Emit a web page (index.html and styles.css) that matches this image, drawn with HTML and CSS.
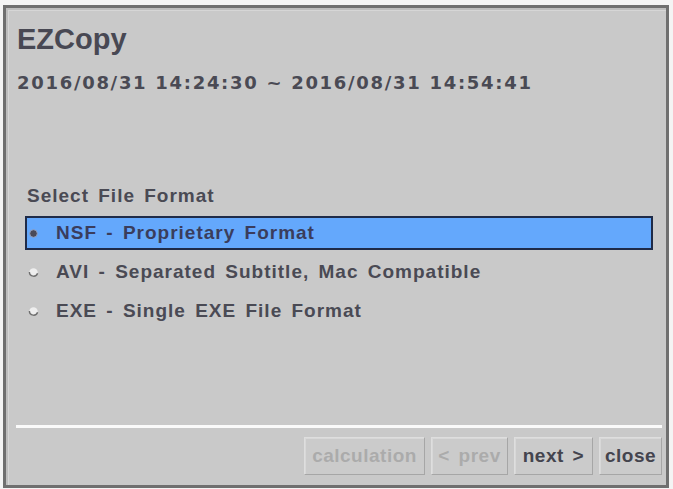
FILE: index.html
```html
<!DOCTYPE html>
<html>
<head>
<meta charset="utf-8">
<link rel="stylesheet" href="styles.css">
</head>
<body>
<div class="frame">
  <div class="title">EZCopy</div>
  <div class="range">2016/08/31 14:24:30 ~ 2016/08/31 14:54:41</div>
  <div class="label">Select File Format</div>
  <div class="options">
    <div class="opt selected">
      <svg class="radio" width="11" height="11" viewBox="0 0 11 11"><circle cx="5.5" cy="5.5" r="3.8" fill="#4a4a58" stroke="#9aa4c0" stroke-width="0.9"/></svg>
      <span>NSF - Proprietary Format</span>
    </div>
    <div class="opt">
      <svg class="radio" width="11" height="11" viewBox="0 0 11 11"><circle cx="5.5" cy="5.5" r="4.2" fill="#eeeeee"/><path d="M1.4 5 A4.2 4.2 0 0 0 9.6 6.3" fill="none" stroke="#6e6e6e" stroke-width="1.4"/></svg>
      <span>AVI - Separated Subtitle, Mac Compatible</span>
    </div>
    <div class="opt">
      <svg class="radio" width="11" height="11" viewBox="0 0 11 11"><circle cx="5.5" cy="5.5" r="4.2" fill="#eeeeee"/><path d="M1.4 5 A4.2 4.2 0 0 0 9.6 6.3" fill="none" stroke="#6e6e6e" stroke-width="1.4"/></svg>
      <span>EXE - Single EXE File Format</span>
    </div>
  </div>
  <div class="spacer"></div>
  <div class="sep"></div>
  <div class="buttons">
    <div class="btn disabled calc">calculation</div>
    <div class="btn disabled prev">&lt; prev</div>
    <div class="btn next">next &gt;</div>
    <div class="btn close">close</div>
  </div>
</div>
</body>
</html>
```
FILE: styles.css
```css
html, body {
  margin: 0;
  padding: 0;
  background: #f4f4f4;
}
body {
  width: 673px;
  height: 489px;
  overflow: hidden;
  font-family: "Liberation Sans", Arial, sans-serif;
  font-weight: bold;
  color: #4a4a54;
}
.frame {
  box-sizing: border-box;
  margin: 5px 4px 0 3px;
  height: 483px;
  background: #c9c9c9;
  border: 3px solid #6f6f6f;
  box-shadow: inset 2px 2px 0 #bdbdbd, inset 3px 3px 0 #d6d6d6;
  padding: 14px 4px 10px 10px;
  display: flex;
  flex-direction: column;
}
.title {
  font-size: 29px;
  line-height: 34px;
  height: 34px;
  margin-left: 1px;
  color: #484853;
}
.range {
  font-family: "DejaVu Sans", "Liberation Sans", sans-serif;
  font-size: 18px;
  line-height: 22px;
  height: 22px;
  margin-top: 16px;
  margin-left: 1px;
  letter-spacing: 1.7px;
  white-space: nowrap;
}
.label {
  font-size: 19px;
  line-height: 24px;
  height: 24px;
  margin-top: 90px;
  margin-left: 11px;
  letter-spacing: 1px;
  word-spacing: 3px;
}
.options {
  margin: 8px 9px 0 9px;
  display: flex;
  flex-direction: column;
  gap: 5px;
}
.opt {
  box-sizing: border-box;
  height: 34px;
  border: 1px solid transparent;
  display: flex;
  align-items: center;
  padding-left: 2px;
  font-size: 19px;
  line-height: 32px;
  letter-spacing: 1px;
  word-spacing: 3px;
  white-space: nowrap;
}
.opt .radio {
  flex: none;
  margin-right: 17px;
}
.opt.selected {
  background: #64a8fc;
  border: 2px solid #1f2b48;
  padding-left: 1px;
  color: #3a3d5c;
}
.spacer {
  flex: 1;
}
.sep {
  height: 3px;
  background: #fafafa;
  margin-bottom: 9px;
}
.buttons {
  display: flex;
  justify-content: flex-end;
  gap: 6px;
  height: 38px;
}
.btn {
  box-sizing: border-box;
  height: 38px;
  display: flex;
  align-items: center;
  justify-content: center;
  font-size: 19px;
  letter-spacing: 0.5px;
  word-spacing: 3px;
  background: #cbcbcb;
  border: 1px solid #dedede;
  border-right-color: #a6a6a6;
  border-bottom-color: #a6a6a6;
  box-shadow: inset 1px 1px 0 #d8d8d8;
  color: #44444e;
  white-space: nowrap;
}
.btn.disabled {
  color: #ababab;
}
.calc { width: 121px; }
.prev { width: 77px; }
.next { width: 79px; }
.close { width: 63px; }
```
